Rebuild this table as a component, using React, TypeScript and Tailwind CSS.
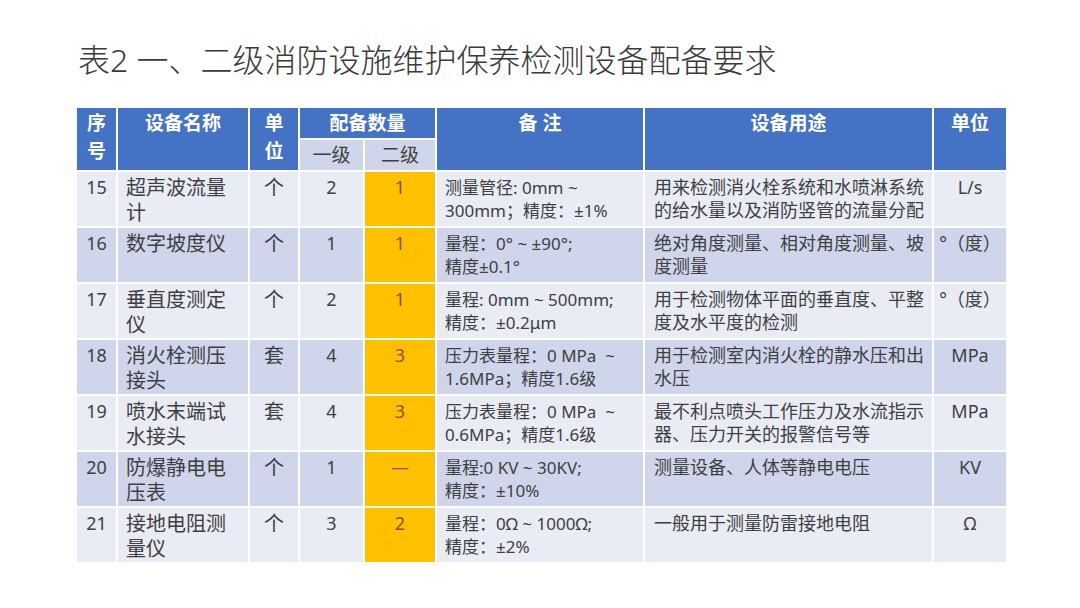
import React from "react"

// ── data ──────────────────────────────────────────────────────────────────────

type Row = {
  no: string
  name: string[]
  unit: string
  lv1: string
  lv2: string
  note: string[]
  use: string[]
  measure: string
}

const rows: Row[] = [
  { no: "15", name: ["超声波流量", "计"], unit: "个", lv1: "2", lv2: "1", note: ["测量管径: 0mm ~", "300mm；精度：±1%"], use: ["用来检测消火栓系统和水喷淋系统", "的给水量以及消防竖管的流量分配"], measure: "L/s" },
  { no: "16", name: ["数字坡度仪"], unit: "个", lv1: "1", lv2: "1", note: ["量程：0° ~ ±90°;", "精度±0.1°"], use: ["绝对角度测量、相对角度测量、坡", "度测量"], measure: "°（度）" },
  { no: "17", name: ["垂直度测定", "仪"], unit: "个", lv1: "2", lv2: "1", note: ["量程: 0mm ~ 500mm;", "精度：±0.2μm"], use: ["用于检测物体平面的垂直度、平整", "度及水平度的检测"], measure: "°（度）" },
  { no: "18", name: ["消火栓测压", "接头"], unit: "套", lv1: "4", lv2: "3", note: ["压力表量程：0 MPa  ~", "1.6MPa；精度1.6级"], use: ["用于检测室内消火栓的静水压和出", "水压"], measure: "MPa" },
  { no: "19", name: ["喷水末端试", "水接头"], unit: "套", lv1: "4", lv2: "3", note: ["压力表量程：0 MPa  ~", "0.6MPa；精度1.6级"], use: ["最不利点喷头工作压力及水流指示", "器、压力开关的报警信号等"], measure: "MPa" },
  { no: "20", name: ["防爆静电电", "压表"], unit: "个", lv1: "1", lv2: "—", note: ["量程:0 KV ~ 30KV;", "精度：±10%"], use: ["测量设备、人体等静电电压"], measure: "KV" },
  { no: "21", name: ["接地电阻测", "量仪"], unit: "个", lv1: "3", lv2: "2", note: ["量程：0Ω ~ 1000Ω;", "精度：±2%"], use: ["一般用于测量防雷接地电阻"], measure: "Ω" },
]

const font = { fontFamily: '"Noto Sans", "Noto Sans CJK SC", sans-serif' }

// ── component ─────────────────────────────────────────────────────────────────

export default function App() {
  const th = "border-2 border-white bg-[#4472c4] text-white font-bold text-[19px] leading-[28px] align-top text-center"
  const td = "border-2 border-white align-top pt-[3px] text-[#3f3f3f]"

  return (
    <div className="w-[1080px] h-[608px] bg-white overflow-hidden" style={font}>
      {/* title */}
      <h1 className="pt-[40px] pl-[78px] text-[32px] leading-[40px] font-light text-[#3a3a3a]">
        表2 一、二级消防设施维护保养检测设备配备要求
      </h1>

      <table className="ml-[75px] mt-[26px] table-fixed border-collapse w-[931px]">
        <colgroup>
          <col className="w-[41px]" />
          <col className="w-[132px]" />
          <col className="w-[50px]" />
          <col className="w-[65px]" />
          <col className="w-[72px]" />
          <col className="w-[208px]" />
          <col className="w-[289px]" />
          <col className="w-[74px]" />
        </colgroup>
        <thead>
          <tr className="h-[32px]">
            <th rowSpan={2} className={`${th} pt-[1px] leading-[27px]`}>序<br />号</th>
            <th rowSpan={2} className={`${th} pt-[1px]`}>设备名称</th>
            <th rowSpan={2} className={`${th} pt-[1px] leading-[27px]`}>单<br />位</th>
            <th colSpan={2} className={`${th} pt-[1px]`}>配备数量</th>
            <th rowSpan={2} className={`${th} pt-[1px]`}>备 注</th>
            <th rowSpan={2} className={`${th} pt-[1px]`}>设备用途</th>
            <th rowSpan={2} className={`${th} pt-[1px]`}>单位</th>
          </tr>
          <tr className="h-[32px]">
            <th className="border-2 border-white bg-[#cfd5ea] text-[#3f3f3f] font-normal text-[19px] leading-[28px] text-center">一级</th>
            <th className="border-2 border-white bg-[#cfd5ea] text-[#3f3f3f] font-normal text-[19px] leading-[28px] text-center">二级</th>
          </tr>
        </thead>
        <tbody>
          {rows.map((r, i) => {
            const bg = i % 2 === 0 ? "bg-[#e9ebf5]" : "bg-[#cfd5ea]"
            return (
              <tr key={r.no} className={`h-[56px] ${bg}`}>
                <td className={`${td} text-[18px] leading-[25px] text-center`}>{r.no}</td>
                <td className={`${td} pl-[8px] text-[20px] leading-[25px]`}>
                  {r.name.map((l) => <div key={l}>{l}</div>)}
                </td>
                <td className={`${td} text-[20px] leading-[25px] text-center`}>{r.unit}</td>
                <td className={`${td} text-[18px] leading-[25px] text-center`}>{r.lv1}</td>
                <td className={`${td} bg-[#ffc000] text-[#7f5500] text-[18px] leading-[25px] text-center`}>{r.lv2}</td>
                <td className={`${td} pl-[8px] pt-[4px] text-[17px] leading-[23px] whitespace-pre`}>
                  {r.note.map((l) => <div key={l}>{l}</div>)}
                </td>
                <td className={`${td} pl-[9px] pt-[4px] text-[18px] leading-[23px] whitespace-nowrap`}>
                  {r.use.map((l) => <div key={l}>{l}</div>)}
                </td>
                <td className={`${td} text-[18px] leading-[25px] text-center whitespace-nowrap`}>{r.measure}</td>
              </tr>
            )
          })}
        </tbody>
      </table>
    </div>
  )
}
